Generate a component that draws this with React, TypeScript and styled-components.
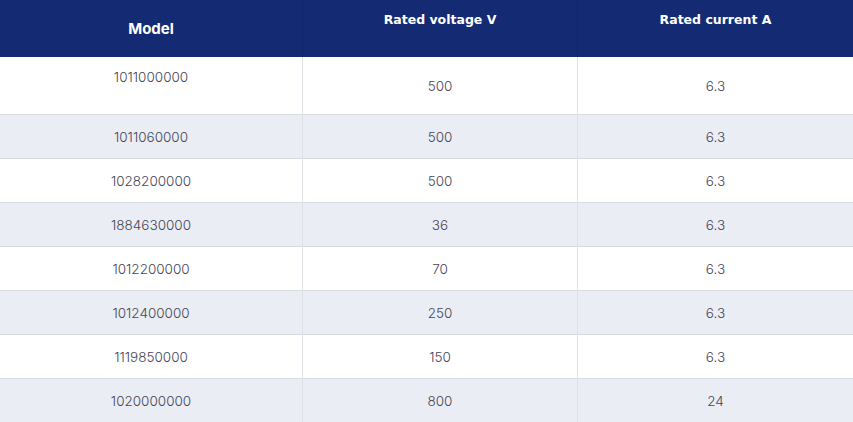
import React from "react";
import styled, { createGlobalStyle } from "styled-components";

const Global = createGlobalStyle`
  html, body { margin: 0; padding: 0; background: #ffffff; }
  #root { width: 853px; }
`;

const Table = styled.div`
  display: grid;
  grid-template-columns: 302px 275px 276px;
  width: 853px;
  box-sizing: border-box;
  border-right: 1px solid #dcdde2;
`;

const HeadCell = styled.div<{ $top?: boolean; $first?: boolean }>`
  height: 57px;
  box-sizing: border-box;
  background: #142b74;
  color: #ffffff;
  display: flex;
  justify-content: center;
  align-items: ${(p) => (p.$top ? "flex-start" : "center")};
  padding-top: ${(p) => (p.$top ? "12px" : "0")};
  border-left: ${(p) => (p.$first ? "none" : "1px solid #10266a")};
  font-family: ${(p) =>
    p.$first ? '"Inter", "Open Sans", sans-serif' : '"DejaVu Sans", Verdana, sans-serif'};
  font-weight: 700;
  font-size: ${(p) => (p.$first ? "15px" : "12.5px")};
`;

const Cell = styled.div<{ $alt: boolean; $first?: boolean; $tall?: boolean; $top?: boolean }>`
  height: ${(p) => (p.$tall ? "57px" : "44px")};
  box-sizing: border-box;
  background: ${(p) => (p.$alt ? "#eaedf4" : "#ffffff")};
  border-top: ${(p) => (p.$tall ? "none" : "1px solid #d9dae0")};
  border-left: ${(p) => (p.$first ? "none" : "1px solid #e0e1e6")};
  display: flex;
  justify-content: center;
  align-items: ${(p) => (p.$top ? "flex-start" : "center")};
  padding-top: ${(p) => (p.$top ? "12px" : "0")};
  font-family: "Inter", "Noto Sans", sans-serif;
  font-weight: 300;
  font-size: 13.5px;
  color: #454559;
`;

const rows: [string, string, string][] = [
  ["1011000000", "500", "6.3"],
  ["1011060000", "500", "6.3"],
  ["1028200000", "500", "6.3"],
  ["1884630000", "36", "6.3"],
  ["1012200000", "70", "6.3"],
  ["1012400000", "250", "6.3"],
  ["1119850000", "150", "6.3"],
  ["1020000000", "800", "24"],
];

export default function App() {
  return (
    <>
      <Global />
      <Table>
        <HeadCell $first>Model</HeadCell>
        <HeadCell $top>Rated voltage V</HeadCell>
        <HeadCell $top>Rated current A</HeadCell>
        {rows.map((r, i) => (
          <React.Fragment key={i}>
            <Cell $alt={i % 2 === 1} $first $tall={i === 0} $top={i === 0}>
              {r[0]}
            </Cell>
            <Cell $alt={i % 2 === 1} $tall={i === 0}>
              {r[1]}
            </Cell>
            <Cell $alt={i % 2 === 1} $tall={i === 0}>
              {r[2]}
            </Cell>
          </React.Fragment>
        ))}
      </Table>
    </>
  );
}
